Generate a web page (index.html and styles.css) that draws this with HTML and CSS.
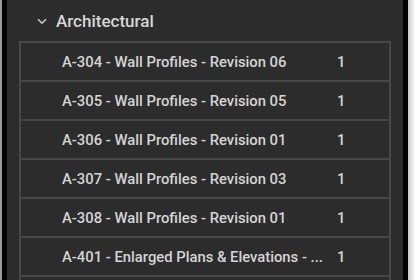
FILE: index.html
```html
<!DOCTYPE html>
<html lang="en">
<head>
    <meta charset="UTF-8">
    <title>Sheets</title>
    <link rel="stylesheet" href="styles.css">
</head>
<body>
    <div class="edge-left"></div>
    <div class="panel">
        <div class="group-header">
            <svg class="chevron" width="10" height="7" viewBox="0 0 10 7">
                <path d="M1 1.2 L5 5.2 L9 1.2" fill="none" stroke="#cfcfcf" stroke-width="1.5"/>
            </svg>
            <span>Architectural</span>
        </div>
        <div class="sheet-list">
            <div class="sheet-row"><span class="sheet-name">A-304 - Wall Profiles - Revision 06</span><span class="sheet-count">1</span></div>
            <div class="sheet-row"><span class="sheet-name">A-305 - Wall Profiles - Revision 05</span><span class="sheet-count">1</span></div>
            <div class="sheet-row"><span class="sheet-name">A-306 - Wall Profiles - Revision 01</span><span class="sheet-count">1</span></div>
            <div class="sheet-row"><span class="sheet-name">A-307 - Wall Profiles - Revision 03</span><span class="sheet-count">1</span></div>
            <div class="sheet-row"><span class="sheet-name">A-308 - Wall Profiles - Revision 01</span><span class="sheet-count">1</span></div>
            <div class="sheet-row"><span class="sheet-name">A-401 - Enlarged Plans &amp; Elevations - ...</span><span class="sheet-count">1</span></div>
            <div class="sheet-row"></div>
        </div>
    </div>
    <div class="edge-right"></div>
</body>
</html>
```

FILE: styles.css
```css
body {
    display: flex;
    height: 280px;
    margin: 0;
    overflow: hidden;
    background: #2c2c2c;
    font-family: Roboto, "Liberation Sans", sans-serif;
}
.edge-left {
    width: 2px;
    background: #9a9a9a;
}
.panel {
    flex: 1;
    border-left: 5px solid #000;
    border-right: 5px solid #000;
    background: #2c2c2c;
    padding: 0 12px;
    overflow: hidden;
}
.edge-right {
    width: 12px;
    background: linear-gradient(to right, #c8c8c8, #ffffff 60%);
}
.group-header {
    display: flex;
    align-items: center;
    gap: 9px;
    height: 41px;
    padding-left: 18px;
    box-sizing: border-box;
    color: #d6d6d6;
    font-size: 17px;
    font-weight: 500;
}
.chevron {
    margin-top: 1px;
}
.sheet-list {
    border: 2px solid #474747;
    border-bottom: none;
}
.sheet-row {
    display: flex;
    align-items: center;
    height: 37px;
    border-bottom: 2px solid #474747;
    color: #d4d4d4;
    font-size: 14.8px;
    font-weight: 500;
}
.sheet-name {
    width: 275px;
    padding-left: 41px;
    white-space: nowrap;
}
.sheet-count {
    margin-left: 0;
}
```
